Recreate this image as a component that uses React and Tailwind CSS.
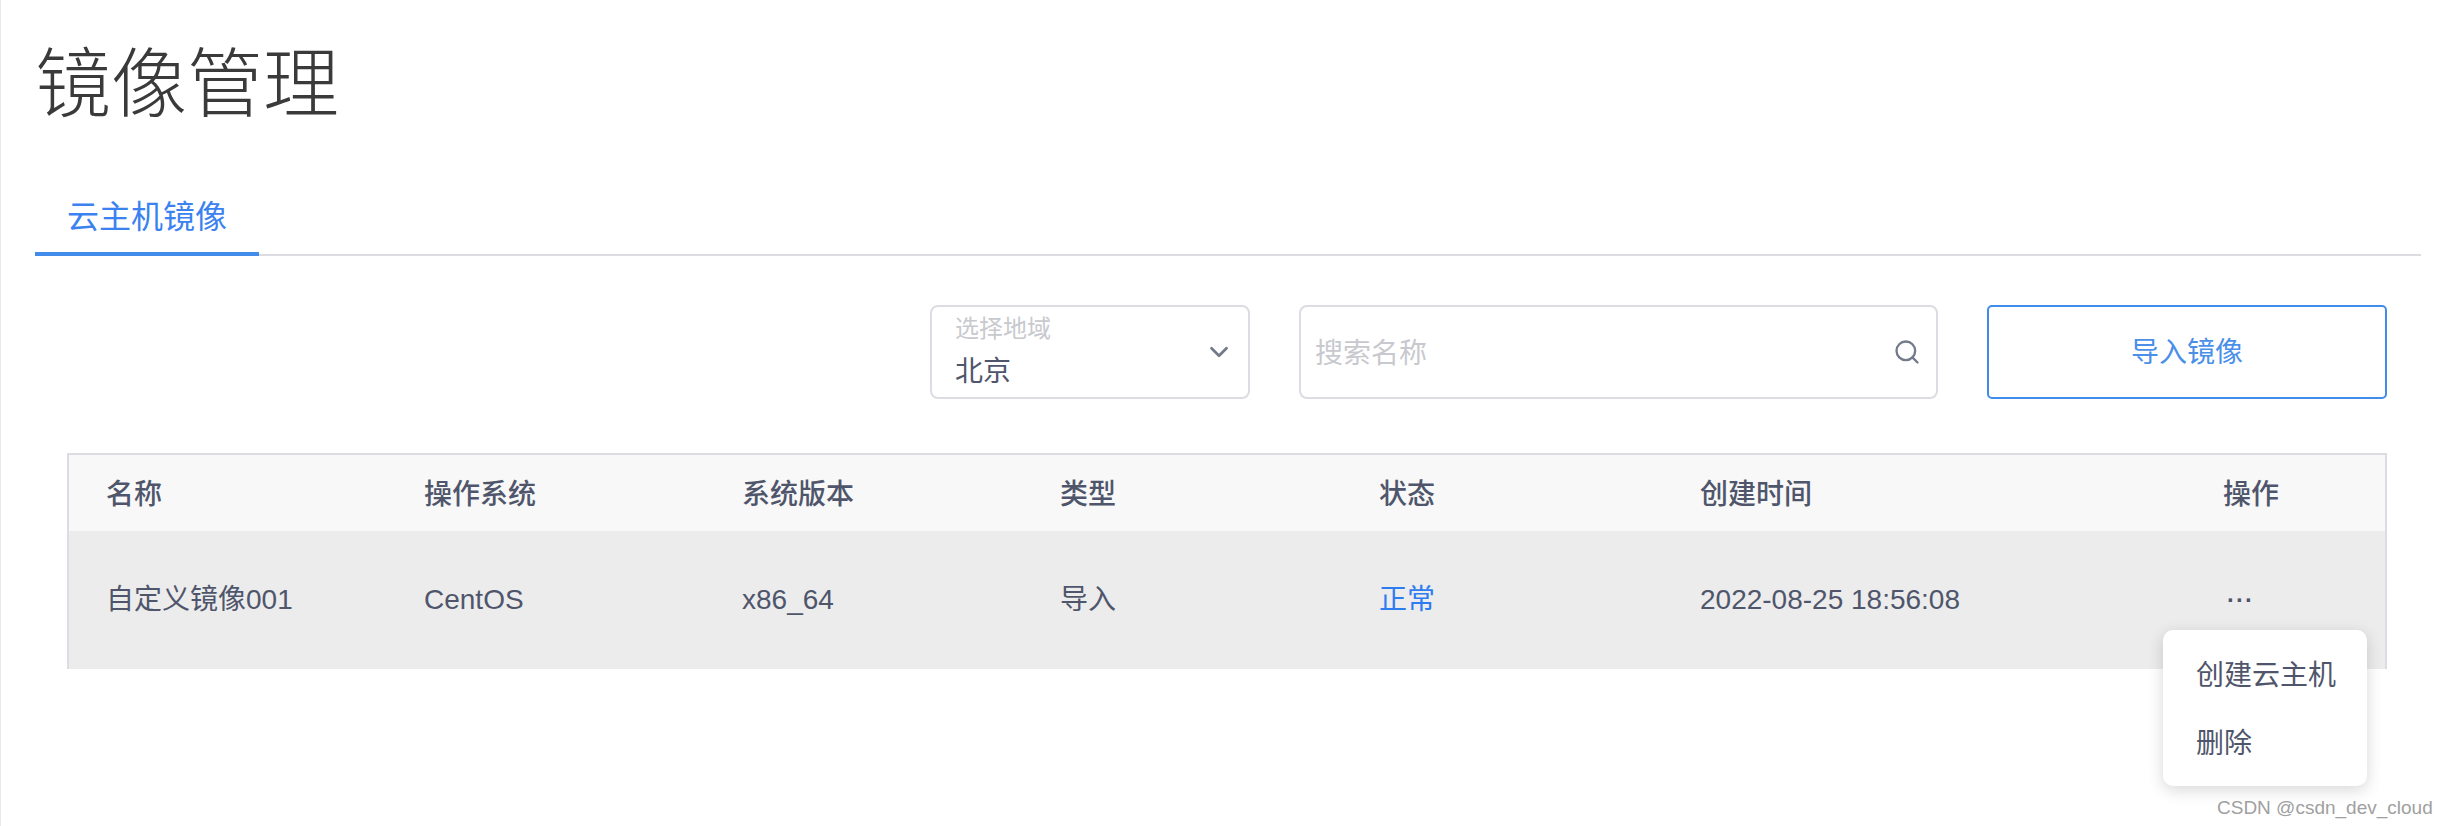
import React from 'react';
import { ChevronDown, Search } from 'lucide-react';

const font = "font-['Liberation_Sans','Noto_Sans_CJK_SC',sans-serif]";

const columns = ['名称', '操作系统', '系统版本', '类型', '状态', '创建时间', '操作'];
const gridCols = 'grid grid-cols-[318px_318px_318px_319px_321px_523px_1fr]';

function Toolbar() {
  return (
    <div className="flex justify-end gap-[49px] pt-[49px] pr-[57px]">
      {/* 地域选择 */}
      <div className="w-[320px] h-[94px] border-2 border-[#dcdde3] rounded-lg flex items-center justify-between pl-[23px] pr-[14px]">
        <div className="flex flex-col pt-[9px]">
          <span className="text-[24px] leading-[30px] text-[#c8c9ce]">选择地域</span>
          <span className="text-[28px] leading-[56px] text-[#4f566b]">北京</span>
        </div>
        <ChevronDown size={30} strokeWidth={2.2} className="text-[#747a8a]" />
      </div>
      {/* 搜索 */}
      <div className="w-[639px] h-[94px] border-2 border-[#dcdde3] rounded-lg flex items-center justify-between pl-[14px] pr-[15px]">
        <span className="text-[28px] text-[#c8c9ce] pt-[3px]">搜索名称</span>
        <Search size={28} strokeWidth={2} className="text-[#747a8a]" />
      </div>
      <button className="w-[400px] h-[94px] border-2 border-[#418bea] rounded-[5px] text-[28px] text-[#4a8fe8] pt-[2px]">
        导入镜像
      </button>
    </div>
  );
}

function ImageTable() {
  return (
    <div className="relative mt-[54px] ml-[67px] mr-[57px]">
      <div className="border-x-2 border-t-2 border-[#dcdde3]">
        <div className={`${gridCols} h-[76px] items-center pl-[37px] pt-[3px] bg-[#f8f8f8] text-[28px] font-medium text-[#4f566b]`}>
          {columns.map((c) => (
            <span key={c}>{c}</span>
          ))}
        </div>
        <div className={`${gridCols} h-[138px] items-center pl-[37px] bg-[#ececed] text-[28px] text-[#4f566b]`}>
          <span>自定义镜像001</span>
          <span>CentOS</span>
          <span>x86_64</span>
          <span>导入</span>
          <span className="text-[#2d7cf0]">正常</span>
          <span>2022-08-25 18:56:08</span>
          <span className="pl-[4px] text-[24px] leading-none font-bold tracking-[1px]">···</span>
        </div>
      </div>
      {/* 操作菜单 */}
      <div className="absolute right-[20px] top-[177px] w-[204px] h-[156px] pt-[3px] bg-white rounded-[10px] shadow-[0_4px_16px_rgba(0,0,0,0.16)] flex flex-col justify-center gap-[28px] pl-[33px] text-[28px] leading-[40px] text-[#4f566b]">
        <span>创建云主机</span>
        <span>删除</span>
      </div>
    </div>
  );
}

export default function App() {
  return (
    <div className={`relative w-[2444px] h-[826px] overflow-hidden bg-white shadow-[inset_1px_0_0_#e8e8e8] ${font}`}>
      <h1 className="pl-[35px] pt-[40px] text-[76px] leading-[90px] font-light text-[#3a3a3a]">镜像管理</h1>
      <div className="mt-[58px] ml-[35px] mr-[23px] border-b-2 border-[#dcdde3]">
        <div className="w-[224px] h-[68px] -mb-[2px] pt-[7px] border-b-4 border-[#418bea] text-center text-[32px] leading-[44px] text-[#3b82f0]">
          云主机镜像
        </div>
      </div>
      <Toolbar />
      <ImageTable />
      <span className="absolute left-[2217px] top-[797px] text-[19px] leading-[22px] text-[#a0a0a0] font-['Liberation_Sans',sans-serif]">
        CSDN @csdn_dev_cloud
      </span>
    </div>
  );
}
